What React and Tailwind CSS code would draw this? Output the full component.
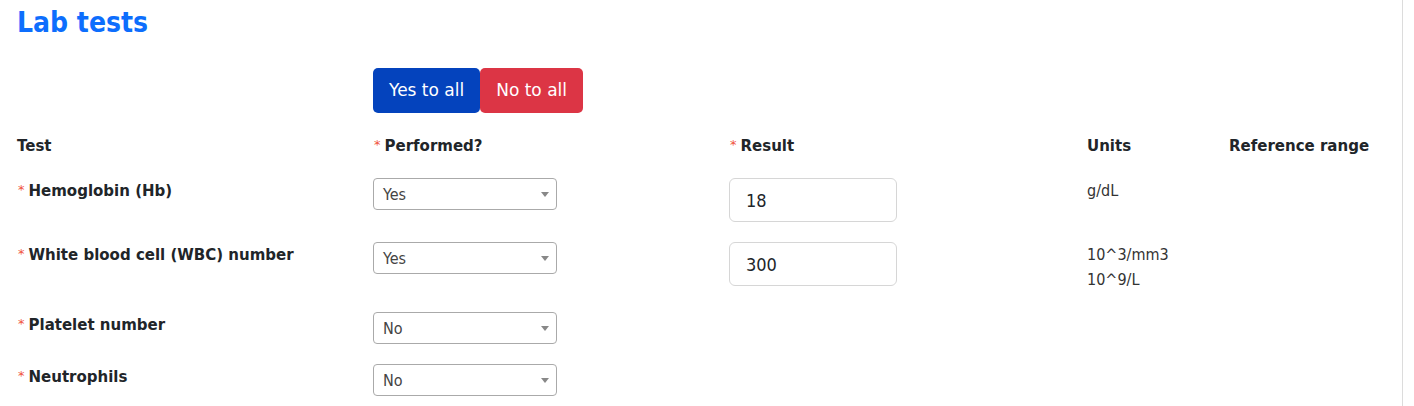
import React from "react";

const cond = "font-['DejaVu_Sans_Condensed','DejaVu_Sans',sans-serif] font-stretch-condensed";
const bold = "font-['DejaVu_Sans',sans-serif] font-bold text-[15px] leading-[22px] text-[#212529]";
const btn = "font-['DejaVu_Sans',sans-serif] h-[45px] px-[16px] rounded-[5px] text-white text-[17px]";

function Req() {
  return (
    <span className="font-['DejaVu_Sans',sans-serif] font-normal text-[13px] text-[#f0543c] mr-[4px] ml-[1px] relative top-[-2px]">
      *
    </span>
  );
}

function Select({ value }) {
  return (
    <div
      className={`w-[184px] h-[32px] border border-[#aaaaaa] rounded-[4px] bg-white flex items-center justify-between pl-[9px] pr-[7px] text-[16px] text-[#444] ${cond}`}
    >
      <span className="pt-[1px]">{value}</span>
      <span className="w-0 h-0 border-l-[4px] border-r-[4px] border-t-[5px] border-l-transparent border-r-transparent border-t-[#888]" />
    </div>
  );
}

function Input({ value }) {
  return (
    <input
      readOnly
      defaultValue={value}
      className={`w-[168px] h-[44px] border border-[#d6d6d6] rounded-[6px] bg-white pl-[16px] pr-[15px] text-[18px] text-[#212529] outline-none ${cond}`}
    />
  );
}

const rows = [
  { label: "Hemoglobin (Hb)", performed: "Yes", result: "18", units: ["g/dL"] },
  { label: "White blood cell (WBC) number", performed: "Yes", result: "300", units: ["10^3/mm3", "10^9/L"] },
  { label: "Platelet number", performed: "No" },
  { label: "Neutrophils", performed: "No" },
];

export default function App() {
  return (
    <div className="w-[1403px] h-[406px] border-r border-[#dcdcdc] bg-white pl-[17px] overflow-hidden">
      <h1 className={`pt-[6px] text-[28px] leading-[34px] font-bold text-[#0d6efd] ${cond}`}>Lab tests</h1>

      <div className="grid grid-cols-[356px_356px_358px_142px_1fr]">
        <div />
        <div className="col-span-4 flex mt-[28px]">
          <button className={`${btn} bg-[#0443bd]`}>Yes to all</button>
          <button className={`${btn} bg-[#dc3545]`}>No to all</button>
        </div>
      </div>

      <div className={`grid grid-cols-[356px_356px_358px_142px_1fr] mt-[22px] ${bold}`}>
        <div>Test</div>
        <div>
          <Req />
          Performed?
        </div>
        <div>
          <Req />
          Result
        </div>
        <div>Units</div>
        <div>Reference range</div>
      </div>

      <div className="grid grid-cols-[356px_356px_358px_142px_1fr] items-start gap-y-[20px] mt-[20px]">
        {rows.map((r) => (
          <React.Fragment key={r.label}>
            <div className={`pt-[2px] ${bold}`}>
              <Req />
              {r.label}
            </div>
            <div>
              <Select value={r.performed} />
            </div>
            <div>{r.result ? <Input value={r.result} /> : null}</div>
            <div className={`text-[16px] leading-[25px] text-[#333] ${cond}`}>
              {(r.units || []).map((u) => (
                <div key={u}>{u}</div>
              ))}
            </div>
            <div />
          </React.Fragment>
        ))}
      </div>
    </div>
  );
}
